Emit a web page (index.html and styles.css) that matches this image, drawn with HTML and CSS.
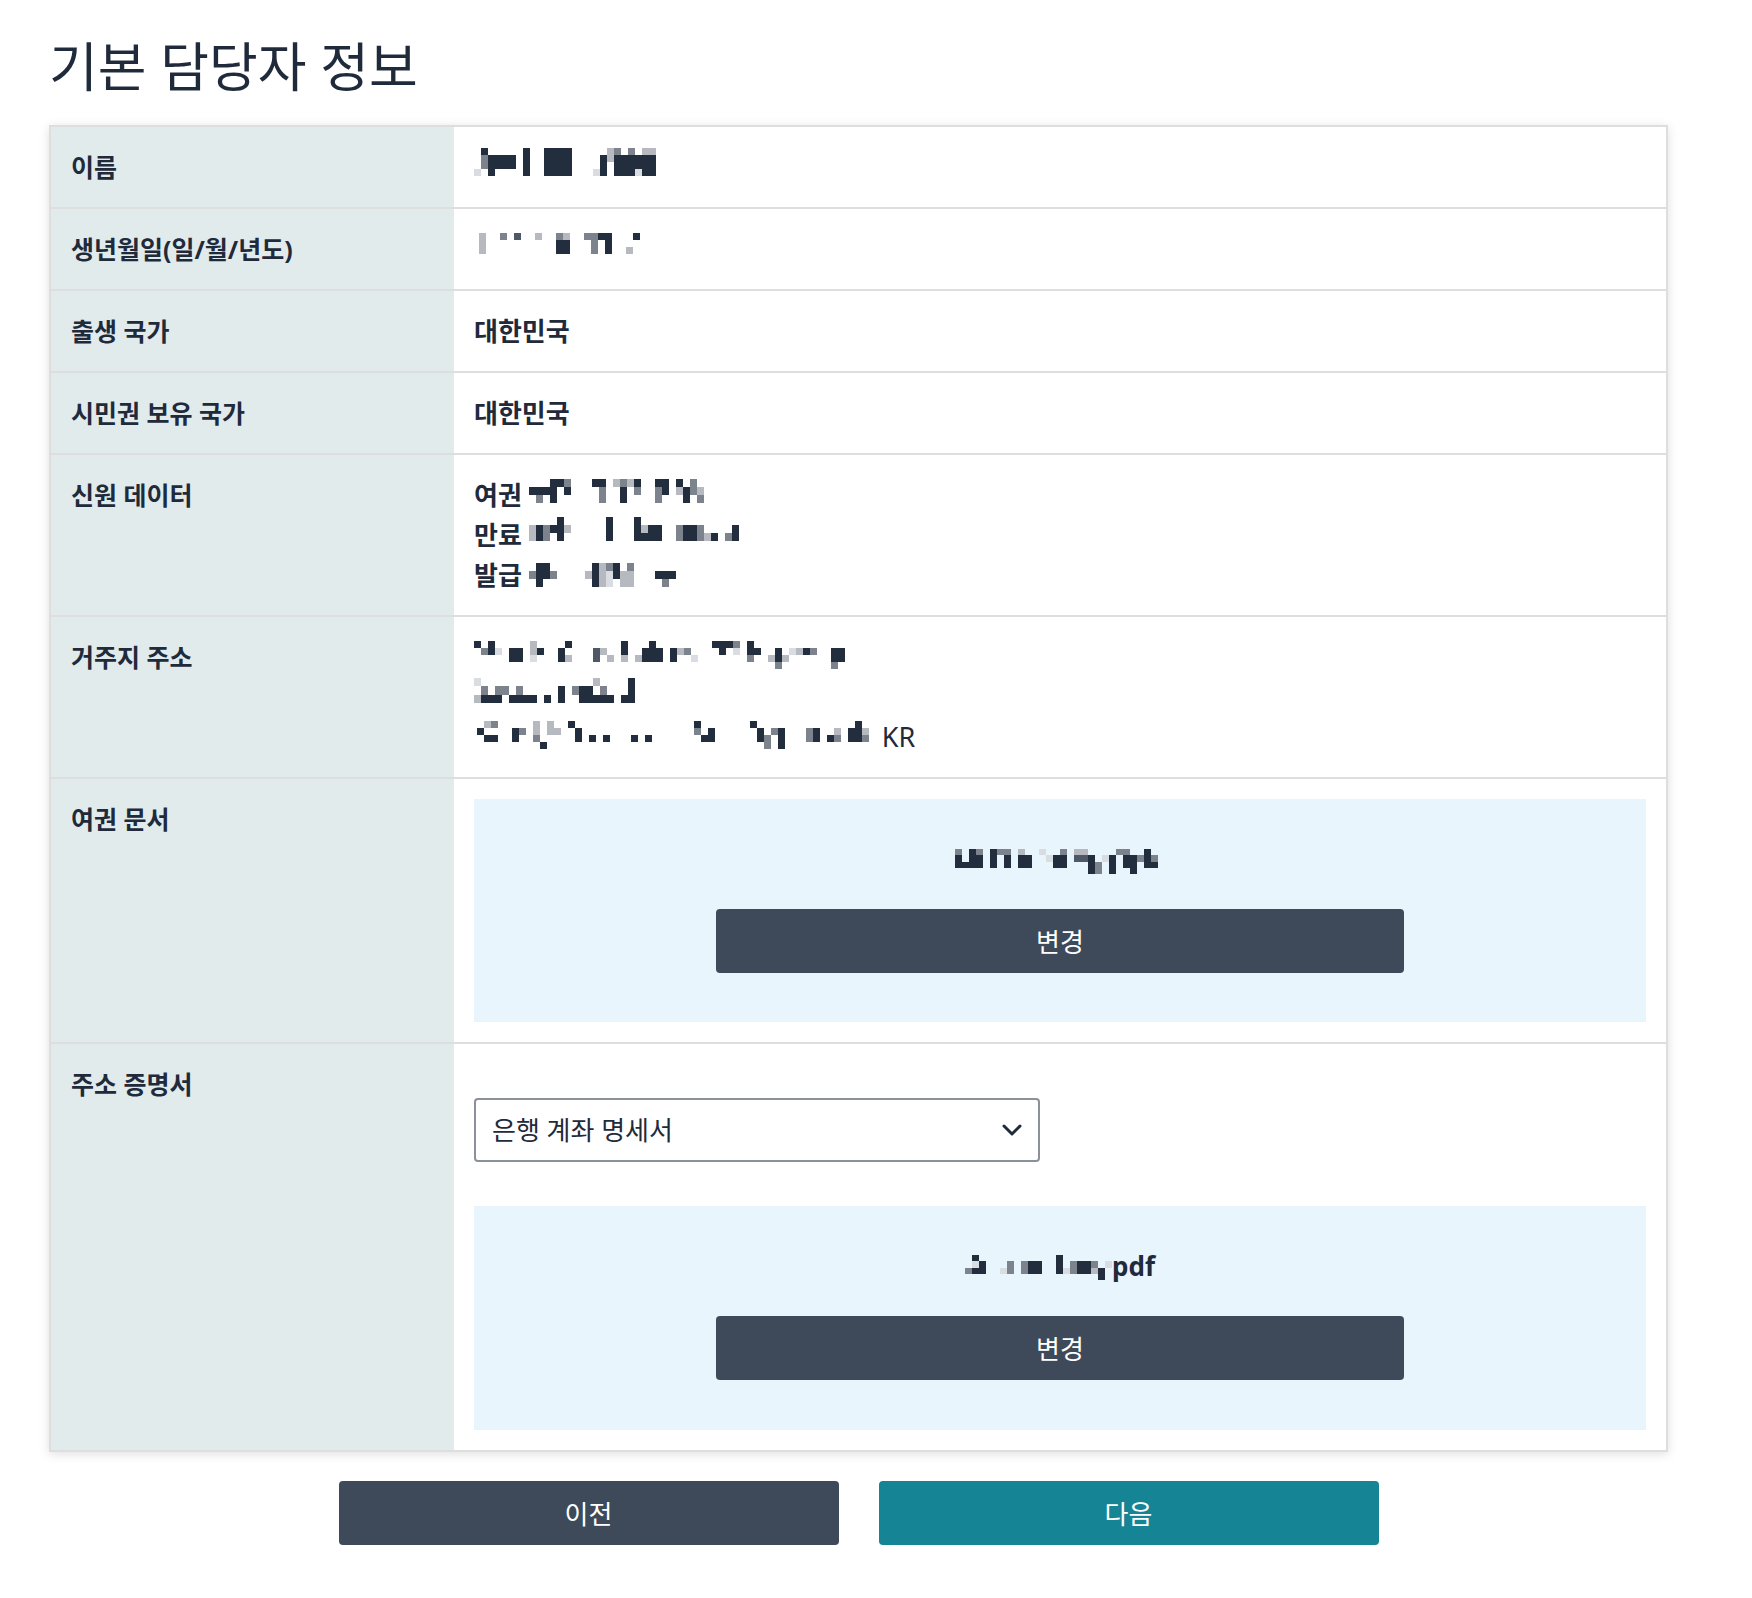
FILE: index.html
```html
<!DOCTYPE html>
<html lang="ko">
<head>
    <meta charset="UTF-8">
    <meta name="viewport" content="width=device-width, initial-scale=1.0">
    <title>기본 담당자 정보</title>
    <link rel="stylesheet" href="styles.css">
</head>
<body>
    <div class="page">
        <h1 class="title">기본 담당자 정보</h1>

        <table class="sheet">
            <tr>
                <th>이름</th>
                <td>
                    <svg class="blur" style="margin-top:1px" width="182" height="28" viewBox="0 0 26 4" preserveAspectRatio="none" shape-rendering="crispEdges">
                        <rect class="x" x="0" y="3" width="1" height="1"/><rect class="d" x="1" y="0" width="1" height="1"/><rect class="g" x="1" y="1" width="1" height="2"/><rect class="d" x="2" y="1" width="4" height="2"/><rect class="d" x="2" y="3" width="1" height="1"/><rect class="d" x="7" y="0" width="1" height="4"/><rect class="d" x="10" y="0" width="1" height="4"/><rect class="d" x="11" y="0" width="3" height="4"/><rect class="x" x="17" y="3" width="1" height="1"/><rect class="d" x="18" y="1" width="1" height="3"/><rect class="l" x="19" y="0" width="1" height="2"/><rect class="g" x="20" y="0" width="1" height="1"/><rect class="d" x="20" y="1" width="4" height="3"/><rect class="g" x="22" y="0" width="1" height="1"/><rect class="l" x="24" y="0" width="2" height="1"/><rect class="d" x="24" y="1" width="2" height="3"/><rect class="x" x="23" y="3" width="1" height="1"/>
                    </svg>
                </td>
            </tr>
            <tr>
                <th>생년월일(일/월/년도)</th>
                <td>
                    <svg class="blur" style="margin:4px 0 0 5px" width="168" height="21" viewBox="0 0 24 3" preserveAspectRatio="none" shape-rendering="crispEdges">
                        <rect class="l" x="0" y="0" width="1" height="3"/><rect class="g" x="3" y="0" width="1" height="1"/><rect class="m" x="5" y="0" width="1" height="1"/><rect class="l" x="8" y="0" width="1" height="1"/><rect class="g" x="11" y="0" width="1" height="1"/><rect class="l" x="12" y="0" width="1" height="1"/><rect class="d" x="11" y="1" width="2" height="2"/><rect class="g" x="15" y="0" width="1" height="1"/><rect class="g" x="16" y="0" width="1" height="1"/><rect class="d" x="17" y="0" width="2" height="1"/><rect class="g" x="16" y="1" width="1" height="2"/><rect class="d" x="18" y="1" width="1" height="2"/><rect class="l" x="21" y="2" width="1" height="1"/><rect class="d" x="22" y="0" width="1" height="1"/>
                    </svg>
                </td>
            </tr>
            <tr>
                <th>출생 국가</th>
                <td>대한민국</td>
            </tr>
            <tr>
                <th>시민권 보유 국가</th>
                <td>대한민국</td>
            </tr>
            <tr>
                <th>신원 데이터</th>
                <td>
                    <div>여권 <svg class="blur" style="margin-top:4px" width="175" height="24" viewBox="0 0 25 3" preserveAspectRatio="none" shape-rendering="crispEdges">
                        <rect class="d" x="0" y="1" width="3" height="1"/><rect class="g" x="1" y="2" width="1" height="1"/><rect class="d" x="3" y="0" width="1" height="3"/><rect class="d" x="4" y="0" width="1" height="1"/><rect class="g" x="5" y="0" width="1" height="1"/><rect class="d" x="5" y="1" width="1" height="1"/><rect class="d" x="9" y="0" width="2" height="1"/><rect class="g" x="10" y="1" width="1" height="2"/><rect class="l" x="12" y="0" width="1" height="1"/><rect class="g" x="13" y="0" width="1" height="1"/><rect class="d" x="13" y="1" width="1" height="2"/><rect class="l" x="14" y="0" width="1" height="1"/><rect class="d" x="15" y="0" width="1" height="1"/><rect class="g" x="15" y="1" width="1" height="1"/><rect class="d" x="18" y="0" width="1" height="1"/><rect class="g" x="18" y="1" width="1" height="2"/><rect class="d" x="19" y="0" width="1" height="2"/><rect class="d" x="21" y="0" width="1" height="1"/><rect class="l" x="21" y="1" width="1" height="1"/><rect class="d" x="22" y="1" width="1" height="2"/><rect class="g" x="23" y="0" width="1" height="2"/><rect class="l" x="24" y="1" width="1" height="1"/><rect class="g" x="24" y="2" width="1" height="1"/>
                    </svg></div>
                    <div>만료 <svg class="blur" style="margin-top:2px" width="210" height="24" viewBox="0 0 30 3" preserveAspectRatio="none" shape-rendering="crispEdges">
                        <rect class="l" x="0" y="1" width="1" height="2"/><rect class="d" x="1" y="1" width="1" height="2"/><rect class="g" x="2" y="1" width="1" height="2"/><rect class="d" x="3" y="1" width="1" height="1"/><rect class="d" x="4" y="0" width="1" height="3"/><rect class="l" x="5" y="1" width="1" height="1"/><rect class="d" x="11" y="0" width="1" height="3"/><rect class="d" x="15" y="0" width="1" height="3"/><rect class="l" x="16" y="1" width="1" height="1"/><rect class="d" x="16" y="2" width="1" height="1"/><rect class="d" x="17" y="1" width="2" height="2"/><rect class="g" x="21" y="1" width="1" height="2"/><rect class="d" x="22" y="1" width="2" height="2"/><rect class="g" x="24" y="1" width="1" height="2"/><rect class="l" x="25" y="2" width="1" height="1"/><rect class="d" x="26" y="2" width="1" height="1"/><rect class="g" x="28" y="2" width="1" height="1"/><rect class="d" x="29" y="1" width="1" height="2"/>
                    </svg></div>
                    <div>발급 <svg class="blur" style="margin-top:8px" width="154" height="24" viewBox="0 0 22 3" preserveAspectRatio="none" shape-rendering="crispEdges">
                        <rect class="d" x="1" y="0" width="2" height="2"/><rect class="d" x="1" y="2" width="1" height="1"/><rect class="g" x="0" y="1" width="1" height="1"/><rect class="g" x="3" y="1" width="1" height="1"/><rect class="l" x="8" y="1" width="1" height="1"/><rect class="d" x="9" y="0" width="1" height="3"/><rect class="l" x="10" y="0" width="1" height="3"/><rect class="g" x="11" y="0" width="1" height="1"/><rect class="x" x="11" y="1" width="1" height="2"/><rect class="d" x="12" y="0" width="1" height="2"/><rect class="l" x="13" y="1" width="2" height="2"/><rect class="g" x="14" y="0" width="1" height="1"/><rect class="d" x="18" y="1" width="3" height="1"/><rect class="g" x="19" y="2" width="1" height="1"/>
                    </svg></div>
                </td>
            </tr>
            <tr>
                <th>거주지 주소</th>
                <td class="plain">
                    <div><svg class="blur" style="margin-top:4px" width="371" height="28" viewBox="0 0 53 4" preserveAspectRatio="none" shape-rendering="crispEdges">
                        <rect class="d" x="0" y="0" width="1" height="1"/><rect class="d" x="2" y="0" width="1" height="1"/><rect class="g" x="1" y="1" width="1" height="1"/><rect class="d" x="2" y="1" width="1" height="1"/><rect class="x" x="3" y="1" width="1" height="1"/><rect class="d" x="5" y="1" width="2" height="2"/><rect class="l" x="8" y="0" width="1" height="2"/><rect class="x" x="8" y="2" width="1" height="1"/><rect class="d" x="9" y="1" width="1" height="1"/><rect class="d" x="13" y="0" width="1" height="1"/><rect class="d" x="12" y="1" width="1" height="2"/><rect class="l" x="13" y="2" width="1" height="1"/><rect class="m" x="17" y="1" width="1" height="2"/><rect class="l" x="18" y="1" width="1" height="1"/><rect class="l" x="19" y="2" width="1" height="1"/><rect class="d" x="21" y="0" width="1" height="2"/><rect class="l" x="21" y="2" width="1" height="1"/><rect class="l" x="23" y="2" width="1" height="1"/><rect class="d" x="24" y="1" width="3" height="2"/><rect class="d" x="25" y="0" width="1" height="1"/><rect class="d" x="28" y="1" width="1" height="2"/><rect class="l" x="29" y="1" width="1" height="1"/><rect class="g" x="30" y="1" width="1" height="1"/><rect class="x" x="31" y="2" width="1" height="1"/><rect class="d" x="34" y="0" width="2" height="1"/><rect class="d" x="35" y="1" width="1" height="1"/><rect class="d" x="36" y="0" width="1" height="1"/><rect class="g" x="37" y="0" width="1" height="1"/><rect class="x" x="37" y="1" width="1" height="1"/><rect class="d" x="39" y="0" width="1" height="2"/><rect class="g" x="39" y="2" width="1" height="1"/><rect class="d" x="40" y="1" width="1" height="1"/><rect class="l" x="42" y="2" width="1" height="1"/><rect class="d" x="43" y="1" width="1" height="2"/><rect class="g" x="43" y="3" width="1" height="1"/><rect class="l" x="44" y="2" width="1" height="1"/><rect class="x" x="45" y="1" width="1" height="1"/><rect class="l" x="46" y="1" width="1" height="1"/><rect class="d" x="47" y="1" width="1" height="1"/><rect class="g" x="48" y="1" width="1" height="1"/><rect class="d" x="51" y="1" width="2" height="2"/><rect class="g" x="51" y="3" width="1" height="1"/>
                    </svg></div>
                    <div><svg class="blur" style="margin-top:1px" width="161" height="25" viewBox="0 0 23 3" preserveAspectRatio="none" shape-rendering="crispEdges">
                        <rect class="x" x="0" y="0" width="1" height="1"/><rect class="l" x="0" y="2" width="1" height="1"/><rect class="g" x="1" y="1" width="1" height="1"/><rect class="d" x="1" y="2" width="2" height="1"/><rect class="g" x="3" y="1" width="1" height="1"/><rect class="d" x="3" y="2" width="1" height="1"/><rect class="g" x="4" y="1" width="1" height="1"/><rect class="d" x="5" y="2" width="1" height="1"/><rect class="g" x="6" y="1" width="1" height="1"/><rect class="d" x="6" y="2" width="3" height="1"/><rect class="d" x="10" y="2" width="1" height="1"/><rect class="d" x="12" y="1" width="1" height="2"/><rect class="g" x="14" y="1" width="1" height="1"/><rect class="d" x="15" y="1" width="2" height="2"/><rect class="l" x="17" y="0" width="1" height="1"/><rect class="d" x="17" y="2" width="1" height="1"/><rect class="g" x="18" y="1" width="1" height="1"/><rect class="d" x="18" y="2" width="2" height="1"/><rect class="d" x="21" y="2" width="1" height="1"/><rect class="d" x="22" y="0" width="1" height="3"/>
                    </svg></div>
                    <div><svg class="blur" style="margin:4px 6px 0 3px" width="392" height="28" viewBox="0 0 56 4" preserveAspectRatio="none" shape-rendering="crispEdges">
                        <rect class="d" x="0" y="1" width="1" height="1"/><rect class="l" x="1" y="0" width="1" height="1"/><rect class="d" x="1" y="2" width="2" height="1"/><rect class="g" x="2" y="0" width="1" height="1"/><rect class="d" x="5" y="1" width="1" height="2"/><rect class="g" x="6" y="1" width="1" height="1"/><rect class="l" x="8" y="0" width="1" height="2"/><rect class="g" x="8" y="2" width="1" height="1"/><rect class="d" x="9" y="3" width="1" height="1"/><rect class="l" x="10" y="0" width="1" height="2"/><rect class="l" x="11" y="1" width="1" height="1"/><rect class="d" x="13" y="0" width="1" height="1"/><rect class="d" x="14" y="1" width="1" height="2"/><rect class="d" x="16" y="2" width="1" height="1"/><rect class="d" x="18" y="2" width="1" height="1"/><rect class="d" x="22" y="2" width="1" height="1"/><rect class="d" x="24" y="2" width="1" height="1"/><rect class="d" x="31" y="0" width="1" height="1"/><rect class="g" x="31" y="1" width="1" height="1"/><rect class="d" x="32" y="2" width="1" height="1"/><rect class="d" x="33" y="1" width="1" height="2"/><rect class="d" x="39" y="0" width="1" height="1"/><rect class="d" x="40" y="1" width="1" height="2"/><rect class="g" x="41" y="2" width="1" height="2"/><rect class="g" x="42" y="1" width="1" height="1"/><rect class="d" x="43" y="1" width="1" height="3"/><rect class="g" x="47" y="1" width="1" height="2"/><rect class="d" x="48" y="1" width="1" height="2"/><rect class="d" x="50" y="2" width="1" height="1"/><rect class="l" x="51" y="1" width="1" height="1"/><rect class="g" x="51" y="2" width="1" height="1"/><rect class="d" x="53" y="1" width="2" height="2"/><rect class="d" x="54" y="0" width="1" height="1"/><rect class="l" x="55" y="1" width="1" height="1"/><rect class="g" x="55" y="2" width="1" height="1"/>
                    </svg> <span class="country">KR</span></div>
                </td>
            </tr>
            <tr>
                <th>여권 문서</th>
                <td>
                    <div class="doc-box">
                        <div class="file-name"><svg class="blur" style="margin-top:10px" width="210" height="25" viewBox="0 0 30 4" preserveAspectRatio="none" shape-rendering="crispEdges">
                            <rect class="g" x="0" y="0" width="1" height="1"/><rect class="d" x="0" y="1" width="1" height="2"/><rect class="d" x="1" y="2" width="1" height="1"/><rect class="d" x="2" y="0" width="1" height="3"/><rect class="g" x="3" y="0" width="1" height="1"/><rect class="d" x="3" y="1" width="1" height="2"/><rect class="d" x="5" y="0" width="1" height="3"/><rect class="g" x="6" y="0" width="1" height="1"/><rect class="g" x="7" y="0" width="1" height="1"/><rect class="d" x="7" y="1" width="1" height="2"/><rect class="l" x="9" y="0" width="1" height="1"/><rect class="d" x="9" y="1" width="2" height="2"/><rect class="x" x="12" y="0" width="1" height="1"/><rect class="x" x="13" y="1" width="1" height="1"/><rect class="d" x="14" y="1" width="1" height="2"/><rect class="g" x="15" y="0" width="1" height="1"/><rect class="d" x="15" y="1" width="1" height="2"/><rect class="l" x="17" y="0" width="2" height="1"/><rect class="m" x="17" y="1" width="2" height="1"/><rect class="d" x="19" y="1" width="1" height="3"/><rect class="g" x="20" y="2" width="1" height="2"/><rect class="x" x="21" y="1" width="1" height="1"/><rect class="d" x="22" y="1" width="1" height="3"/><rect class="g" x="23" y="0" width="2" height="1"/><rect class="d" x="24" y="1" width="1" height="2"/><rect class="d" x="25" y="1" width="1" height="3"/><rect class="g" x="26" y="1" width="1" height="1"/><rect class="d" x="27" y="0" width="1" height="3"/><rect class="g" x="28" y="1" width="1" height="1"/><rect class="d" x="28" y="2" width="1" height="1"/>
                        </svg></div>
                        <button class="btn btn-change">변경</button>
                    </div>
                </td>
            </tr>
            <tr>
                <th>주소 증명서</th>
                <td>
                    <div class="select-wrap">
                        <select class="select">
                            <option>은행 계좌 명세서</option>
                            <option>공과금 고지서</option>
                        </select>
                        <svg class="chevron" width="20" height="12" viewBox="0 0 20 12">
                            <path d="M2 2 L10 10 L18 2" fill="none" stroke="currentColor" stroke-width="3" stroke-linecap="round" stroke-linejoin="round"/>
                        </svg>
                    </div>
                    <div class="doc-box doc-box-gap">
                        <div class="file-name"><svg class="blur" style="margin-top:9px" width="147" height="25" viewBox="0 0 21 4" preserveAspectRatio="none" shape-rendering="crispEdges">
                            <rect class="d" x="1" y="0" width="1" height="1"/><rect class="g" x="0" y="2" width="1" height="1"/><rect class="x" x="1" y="1" width="1" height="1"/><rect class="d" x="1" y="2" width="1" height="1"/><rect class="d" x="2" y="1" width="1" height="2"/><rect class="x" x="5" y="2" width="1" height="1"/><rect class="g" x="6" y="1" width="1" height="2"/><rect class="g" x="8" y="1" width="1" height="2"/><rect class="d" x="9" y="1" width="2" height="2"/><rect class="d" x="13" y="0" width="1" height="3"/><rect class="x" x="14" y="2" width="1" height="1"/><rect class="g" x="15" y="1" width="1" height="2"/><rect class="d" x="16" y="1" width="2" height="2"/><rect class="g" x="18" y="1" width="1" height="1"/><rect class="l" x="18" y="2" width="1" height="1"/><rect class="d" x="19" y="2" width="1" height="2"/><rect class="x" x="20" y="1" width="1" height="1"/>
                        </svg>pdf</div>
                        <button class="btn btn-change">변경</button>
                    </div>
                </td>
            </tr>
        </table>

        <div class="nav">
            <button class="btn btn-nav btn-prev">이전</button>
            <button class="btn btn-nav btn-next">다음</button>
        </div>
    </div>
</body>
</html>
```

FILE: styles.css
```css
body {
    margin: 0;
    font-family: "Noto Sans", "Noto Sans CJK KR", sans-serif;
    color: #1f2a3b;
    background-color: #ffffff;
}
.page {
    width: 1619px;
    padding: 27px 0 40px 49px;
}
.title {
    margin: 0 0 18px;
    font-size: 53px;
    font-weight: 400;
    line-height: 80px;
}
.sheet {
    width: 100%;
    border-spacing: 0;
    border: 2px solid #dedede;
    box-shadow: 0 2px 10px rgba(0,0,0,0.13);
}
.sheet th,
.sheet td {
    padding: 20px;
    vertical-align: top;
    text-align: left;
    font-size: 26px;
    line-height: 40px;
    font-weight: 700;
    border-bottom: 2px solid #dedede;
}
.sheet tr:last-child th,
.sheet tr:last-child td {
    border-bottom: none;
}
.sheet th {
    width: 363px;
    font-size: 25px;
    background-color: #e2ebec;
}
.sheet td.plain {
    font-weight: 400;
}
.country {
    font-size: 27px;
}
.blur {
    display: inline-block;
    vertical-align: top;
}
.blur .d { fill: #222d3e; }
.blur .m { fill: #4f5866; }
.blur .g { fill: #7d838c; }
.blur .l { fill: #b6bac0; }
.blur .x { fill: #d9dce0; }
.doc-box {
    background-color: #e8f5fd;
    padding: 40px 0 49px;
    text-align: center;
}
.doc-box-gap {
    margin-top: 44px;
    padding-bottom: 50px;
}
.file-name {
    line-height: 40px;
    font-weight: 700;
}
.btn {
    border: none;
    border-radius: 4px;
    color: #ffffff;
    font-family: inherit;
    font-size: 26px;
    font-weight: 400;
    cursor: pointer;
}
.btn-change {
    display: block;
    width: 688px;
    height: 64px;
    margin: 30px auto 0;
    background-color: #3e4a5a;
}
.select-wrap {
    position: relative;
    width: 566px;
    margin-top: 34px;
}
.select {
    width: 100%;
    height: 64px;
    box-sizing: border-box;
    padding: 0 50px 0 16px;
    border: 2px solid #8b9099;
    border-radius: 4px;
    background-color: #ffffff;
    color: #1f2a3b;
    font-family: inherit;
    font-size: 26px;
    font-weight: 400;
    -webkit-appearance: none;
    appearance: none;
}
.chevron {
    position: absolute;
    right: 18px;
    top: 26px;
    color: #1f2a3b;
    pointer-events: none;
}
.nav {
    display: flex;
    justify-content: center;
    gap: 40px;
    margin-top: 29px;
}
.btn-nav {
    width: 500px;
    height: 64px;
}
.btn-prev {
    background-color: #3e4a5a;
}
.btn-next {
    background-color: #158495;
}
```
